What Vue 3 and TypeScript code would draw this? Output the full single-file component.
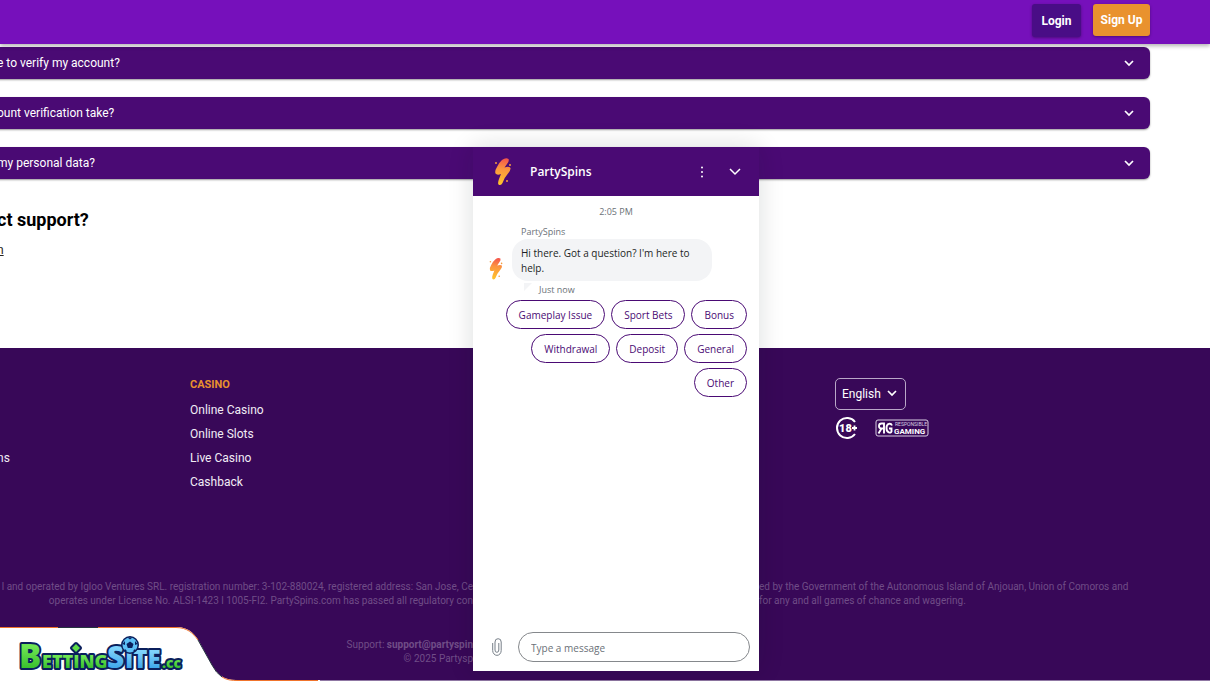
<script setup lang="ts">
const faqs: string[] = ['e to verify my account?', 'ount verification take?', 'my personal data?']
const casinoLinks: string[] = ['Online Casino', 'Online Slots', 'Live Casino', 'Cashback']
const replies: string[] = ['Gameplay Issue', 'Sport Bets', 'Bonus', 'Withdrawal', 'Deposit', 'General', 'Other']
</script>

<template>
  <div class="page">
    <header class="topbar">
      <button class="btn login" type="button">Login</button>
      <button class="btn signup" type="button">Sign Up</button>
    </header>

    <main class="content">
      <button v-for="q in faqs" :key="q" class="faq" type="button">
        <span>{{ q }}</span>
        <svg width="10" height="7" viewBox="0 0 10 7" aria-hidden="true">
          <path d="M1 1 L5 5 L9 1" fill="none" stroke="#fff" stroke-width="1.7" />
        </svg>
      </button>
      <h2>ct support?</h2>
      <a class="mail" href="#">n</a>
    </main>

    <footer class="footer">
      <div class="columns">
        <ul class="col first">
          <li><a href="#">ns</a></li>
        </ul>
        <nav class="col casino" aria-label="Casino">
          <h3>CASINO</h3>
          <ul>
            <li v-for="l in casinoLinks" :key="l"><a href="#">{{ l }}</a></li>
          </ul>
        </nav>
        <div class="extras">
          <div class="lang">
            <select aria-label="Language">
              <option>English</option>
            </select>
            <svg width="10" height="7" viewBox="0 0 10 7" aria-hidden="true">
              <path d="M1 1 L5 5 L9 1" fill="none" stroke="#fff" stroke-width="1.7" />
            </svg>
          </div>
          <div class="badges">
            <svg width="24" height="24" viewBox="0 0 24 24" role="img" aria-label="18+">
              <path d="M20 6 A10 10 0 1 0 20 18" fill="none" stroke="#fff" stroke-width="2" />
              <text x="4" y="16" font-size="11" font-weight="900" fill="#fff">18</text>
              <path d="M19.5 9.500v5M17 12h5" stroke="#fff" stroke-width="1.8" />
            </svg>
            <svg width="54" height="18" viewBox="0 0 54 18" role="img" aria-label="Responsible gaming">
              <rect x="1" y="1" width="52" height="16" rx="2" fill="none" stroke="#d8cfe2" />
              <path d="M9 3.500V14.500M9 4.500H6.500a2.300 2.300 0 0 0 0 5H9M6.500 9.500L3.500 14.500" fill="none" stroke="#fff" stroke-width="1.9" />
              <path d="M17 6.500C16 4 11.500 3.800 11.500 9S16 14.500 16.500 12.500V9.500H14" fill="none" stroke="#fff" stroke-width="1.9" />
              <text x="20" y="7" font-size="5" fill="#d8cfe2">RESPONSIBLE</text>
              <text x="19" y="15" font-size="8" font-weight="700" fill="#fff">GAMING</text>
            </svg>
          </div>
        </div>
      </div>

      <div class="legal">
        <p class="before">l and operated by Igloo Ventures SRL. registration number: 3-102-880024, registered address: San Jose, Ce</p>
        <p class="after">ed by the Government of the Autonomous Island of Anjouan, Union of Comoros and</p>
        <p class="before">operates under License No. ALSI-1423 l 1005-FI2. PartySpins.com has passed all regulatory con</p>
        <p class="after">for any and all games of chance and wagering.</p>
      </div>
      <div class="legal support">
        <p class="before">Support: <b>support@partyspin</b></p>
        <p class="before">© 2025 Partysp</p>
      </div>
    </footer>

    <svg class="sponsor" width="320" height="54" viewBox="0 0 320 54" role="img" aria-label="BettingSite.cc">
      <defs>
        <linearGradient id="green" x1="0" y1="0" x2="0" y2="1">
          <stop offset=".3" stop-color="#6fe653" />
          <stop offset=".8" stop-color="#37bf2c" />
        </linearGradient>
        <linearGradient id="blue" x1="0" y1="0" x2="0" y2="1">
          <stop offset=".3" stop-color="#7fd3fb" />
          <stop offset=".8" stop-color="#3ea6ea" />
        </linearGradient>
      </defs>
      <path d="M0 0H176C190 0 196 8 201 18L212 38C218 48 224 53 236 53H320V54H0Z" fill="#fff" />
      <path d="M0 .5H176C187 .5 193 6 198 13M222 50C227 53 231 53.500 238 53.500H318" fill="none" stroke="#f0742c" />
      <path d="M58 .5H98M198 13L212 38Q216 46 222 50" fill="none" stroke="#26343f" />
      <g class="wordmark" stroke="#0b1f5c" stroke-width="4" stroke-linejoin="round" paint-order="stroke">
        <text x="19" y="41" font-size="33" fill="url(#green)">B</text>
        <text x="42" y="41" font-size="18" fill="url(#green)">ETTING</text>
        <path d="M76 17L80 21L76 25L72 21Z" fill="#5fdc48" />
        <text x="107" y="41" font-size="30" fill="url(#blue)">S</text>
        <text x="125" y="41" font-size="24" fill="url(#blue)">ITE</text>
        <text x="162" y="41" font-size="14" fill="url(#green)">.cc</text>
        <circle cx="130" cy="18" r="7.500" fill="#5cc0f6" stroke-width="3" />
      </g>
      <g fill="#0b1f5c">
        <path d="M130 14.500L133.500 17L132.200 21H127.800L126.500 17Z" />
        <path d="M127.500 10.500H132.500L130 12.500ZM122.500 17L125 14V18ZM137.500 17L135 14V18ZM125 22L127.500 24.500L124 24ZM135 22L132.500 24.500L136 24Z" />
      </g>
    </svg>

    <section class="chat" aria-label="Chat">
      <header class="chat-head">
        <svg width="20" height="30" viewBox="0 0 20 30" aria-hidden="true">
          <defs>
            <linearGradient id="bolt" gradientUnits="userSpaceOnUse" x1="12" y1="1" x2="8" y2="28">
              <stop offset="0" stop-color="#f4524c" />
              <stop offset=".4" stop-color="#fb9440" />
              <stop offset="1" stop-color="#ffc52b" />
            </linearGradient>
          </defs>
          <path d="M9 3Q13 0 15.500 2Q16.500 4 14 7L11.500 10.500Q16 9 17.500 11Q18 13 15 16.500Q11 21 9.500 26Q8 29 5.500 27.500Q4.500 26 6 22L8 17Q4 18.500 2.500 16.500Q1.500 14 4 10Q6 5.500 9 3Z" fill="url(#bolt)" />
          <g fill="#f49a3c"><circle cx="3" cy="6" r="1" /><circle cx="17" cy="8" r="1" /><circle cx="14" cy="24" r="1" /></g>
        </svg>
        <h1>PartySpins</h1>
        <button class="icon-btn" type="button" aria-label="Menu">
          <svg width="4" height="12" viewBox="0 0 4 12"><g fill="#fff"><circle cx="2" cy="1.500" r="1" /><circle cx="2" cy="6" r="1" /><circle cx="2" cy="10.500" r="1" /></g></svg>
        </button>
        <button class="icon-btn" type="button" aria-label="Minimise">
          <svg width="12" height="8" viewBox="0 0 12 8"><path d="M1 1L6 6L11 1" fill="none" stroke="#fff" stroke-width="1.500" /></svg>
        </button>
      </header>
      <div class="chat-body">
        <time>2:05 PM</time>
        <div class="message">
          <svg class="avatar" width="16" height="24" viewBox="0 0 20 30" aria-hidden="true">
            <path d="M9 3Q13 0 15.500 2Q16.500 4 14 7L11.500 10.500Q16 9 17.500 11Q18 13 15 16.500Q11 21 9.500 26Q8 29 5.500 27.500Q4.500 26 6 22L8 17Q4 18.500 2.500 16.500Q1.500 14 4 10Q6 5.500 9 3Z" fill="url(#bolt)" />
            <g fill="#f49a3c"><circle cx="3" cy="6" r="1" /><circle cx="17" cy="8" r="1" /><circle cx="14" cy="24" r="1" /></g>
          </svg>
          <div>
            <span class="author">PartySpins</span>
            <p class="bubble">Hi there. Got a question? I'm here to help.</p>
          </div>
        </div>
        <div class="stamp">
          <svg width="9" height="9" viewBox="0 0 9 9" aria-hidden="true"><path d="M0 0H8L0 8Z" fill="#f3f4f6" /></svg>
          <span>Just now</span>
        </div>
        <div class="replies">
          <button v-for="r in replies" :key="r" type="button">{{ r }}</button>
        </div>
      </div>
      <div class="composer">
        <button class="icon-btn" type="button" aria-label="Attach file">
          <svg width="10" height="18" viewBox="0 0 10 18"><path d="M.7 5V12.500a4.200 4.800 0 0 0 8.500 0V4a3.100 3.300 0 0 0-6.200 0v8a1.900 2.300 0 0 0 3.800 0V5" fill="none" stroke="#777f88" /></svg>
        </button>
        <input type="text" placeholder="Type a message" aria-label="Type a message" />
      </div>
    </section>
  </div>
</template>

<style>
body { margin: 0; background: #fff; }
</style>

<style scoped>
* { box-sizing: border-box; }
h1, h2, h3, p, ul { margin: 0; padding: 0; }
ul { list-style: none; }
button, select, input { font: inherit; margin: 0; cursor: pointer; }
a { color: inherit; text-decoration: none; }
.page { position: relative; display: flex; flex-direction: column; min-height: 100vh; overflow: hidden; font-family: Roboto, sans-serif; font-size: 12px; line-height: 16px; background: #fff; }
.topbar { position: relative; z-index: 1; display: flex; justify-content: flex-end; align-items: flex-start; gap: 12px; height: 44px; padding: 4px 60px 0 0; background: #7610bb; box-shadow: 0 2px 4px rgba(0, 0, 0, .3); }
.btn { border: 0; border-radius: 3px; height: 32px; color: #fff; font-weight: 700; box-shadow: 0 1px 3px rgba(0, 0, 0, .35); }
.login { width: 49px; height: 33px; padding: 0; background: #490d86; }
.signup { width: 57px; padding: 0; background: #e9922e; }
.content { display: flex; flex-direction: column; align-items: flex-start; margin-left: -3px; padding: 3px 60px 90px 0; }
.faq { display: flex; justify-content: space-between; align-items: center; width: 100%; height: 32px; margin-bottom: 18px; padding: 0 16px 0 0; border: 0; border-radius: 0 6px 6px 0; background: #4a0a74; color: #fff; box-shadow: 0 1px 2px rgba(0, 0, 0, .4); }
h2 { margin-top: 11px; font-size: 18px; line-height: 24px; color: #000; }
.mail { margin-top: 10px; color: #222; text-decoration: underline; }
.footer { flex: 1; background: #380858; color: #f1ecf5; border-bottom: 1px solid #8f77a3; }
.columns { display: grid; grid-template-columns: 190px 645px 1fr; height: 232px; padding-top: 30px; }
.first { margin-left: -3px; padding-top: 68px; }
h3 { font-size: 11px; line-height: 14px; color: #e8912e; margin-bottom: 6px; }
.col li { height: 24px; line-height: 24px; }
.lang { position: relative; width: 71px; }
.lang select { width: 100%; height: 32px; padding: 0 6px; border: 1px solid #b9a8c8; border-radius: 5px; background: transparent; color: #fff; appearance: none; }
.lang svg { position: absolute; right: 9px; top: 12px; pointer-events: none; }
.badges { display: flex; align-items: center; gap: 16px; margin-top: 6px; }
.legal { display: grid; grid-template-columns: 473px 1fr; column-gap: 286px; font-size: 10px; line-height: 14px; color: #704d87; white-space: nowrap; }
.before { text-align: right; }
.support { grid-template-columns: 473px; margin-top: 30px; }
.sponsor { position: absolute; left: 0; bottom: 0; }
.wordmark { font-family: "Open Sans", sans-serif; font-weight: 800; }
.chat { position: absolute; z-index: 2; left: 473px; bottom: 10px; display: flex; flex-direction: column; width: 286px; height: 524px; background: #fff; font-family: "Open Sans", sans-serif; font-size: 10px; line-height: 15px; color: #1c1f24; box-shadow: 0 0 24px rgba(0, 20, 20, .14); }
.chat-head { display: flex; align-items: center; height: 49px; padding: 0 12px 0 20px; background: #4a0a74; color: #fff; }
.chat-head h1 { flex: 1; margin-left: 17px; font-size: 12px; font-weight: 600; }
.icon-btn { display: flex; align-items: center; justify-content: center; width: 24px; height: 24px; padding: 0; border: 0; background: none; }
.chat-head .icon-btn + .icon-btn { margin-left: 9px; }
.chat-body { flex: 1; display: flex; flex-direction: column; padding: 8px 12px 0; }
time { align-self: center; font-size: 9px; color: #6b7178; }
.message { display: flex; align-items: flex-end; gap: 8px; margin-top: 6px; padding-left: 3px; }
.author { display: block; margin-left: 9px; font-size: 9px; color: #6b7178; line-height: 14px; }
.bubble { width: 200px; padding: 7px 9px 5px; border-radius: 16px; background: #f3f4f6; }
.stamp { display: flex; gap: 6px; margin-left: 39px; font-size: 9px; line-height: 17px; color: #6b7178; }
.stamp svg { margin-top: 2px; }
.replies { display: flex; flex-wrap: wrap; justify-content: flex-end; gap: 5px 6px; margin-top: 2px; }
.replies button { height: 29px; padding: 2px 12px 0; border: 1px solid #4a0a74; border-radius: 15px; background: #fff; color: #4a0a74; }
.composer { display: flex; align-items: center; gap: 9px; padding: 0 9px 9px 12px; }
.composer input { flex: 1; min-width: 0; height: 30px; padding: 2px 12px 0; border: 1px solid #85888c; border-radius: 15px; outline: 0; background: #fff; }
.composer input::placeholder { color: #6b7178; opacity: 1; }
</style>
